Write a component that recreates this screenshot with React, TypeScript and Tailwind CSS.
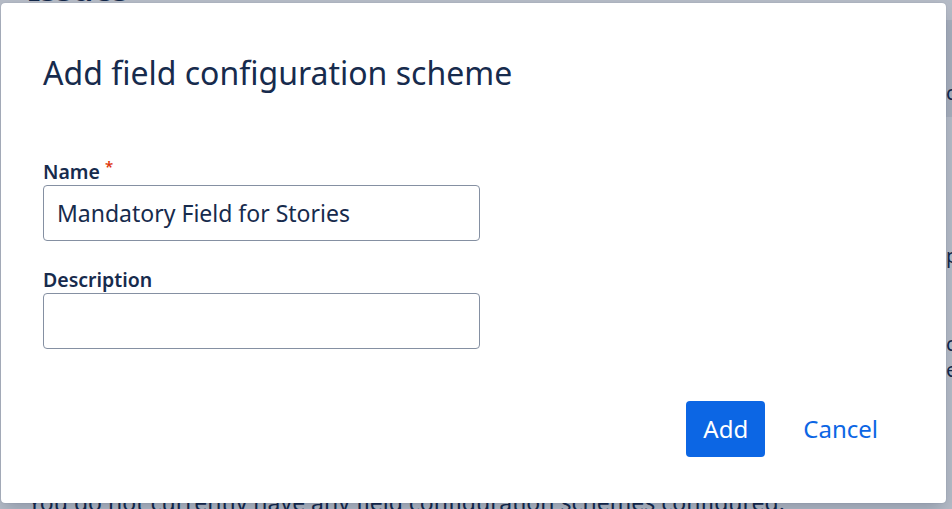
import React from "react";

export default function App() {
  return (
    <div className="relative w-[952px] h-[509px] overflow-hidden bg-white text-[#172b4d]" style={{ fontFamily: '"Noto Sans", "Open Sans", sans-serif' }}>
      {/* page behind the modal */}
      <div className="flex h-full">
        <div className="w-[946px] shrink-0 pl-[28px] flex flex-col">
          <h1 className="text-[32px] leading-[36px] font-bold mt-[-29px]">Issues</h1>
          <div className="flex-1" />
          <p className="text-[23px] leading-[28px] mb-[-7px] whitespace-nowrap">
            You do not currently have any field configuration schemes configured.
          </p>
        </div>
        <div className="flex-1 flex flex-col text-[20px] leading-[26px] whitespace-nowrap">
          <div className="mt-[20px] h-[97px] bg-[#ebecf0] pt-[60px]">configuration</div>
          <div className="mt-[126px]">p</div>
          <div className="mt-[62px]">c</div>
          <div>e</div>
        </div>
      </div>

      {/* overlay */}
      <div className="absolute inset-0 bg-[#091e42]/30" />

      {/* modal */}
      <div className="absolute left-[1px] top-[3px] w-[945px] h-[500px] bg-white rounded-[4px] shadow-[0_8px_16px_-4px_rgba(9,30,66,0.25),0_0_1px_rgba(9,30,66,0.31)] flex flex-col px-[42px]">
        <h2 className="text-[32px] leading-[40px] font-normal mt-[50px] whitespace-nowrap">Add field configuration scheme</h2>

        <div className="mt-[67px] flex flex-col">
          <label className="text-[19.5px] leading-[24px] font-semibold">
            Name<span className="text-[#de350b] text-[15px] align-top relative top-[-6px] ml-[5px]">*</span>
          </label>
          <input
            defaultValue="Mandatory Field for Stories"
            className="mt-[1px] w-[437px] h-[56px] border border-[#8590a2] rounded-[4px] px-[13px] text-[23px] text-[#172b4d] outline-none"
          />
          <label className="mt-[27px] text-[19.5px] leading-[24px] font-semibold">Description</label>
          <input className="mt-[1px] w-[437px] h-[56px] border border-[#8590a2] rounded-[4px] px-[13px] text-[23px] outline-none" />
        </div>

        <div className="mt-[52px] flex justify-end items-center gap-[26px] pr-[14px]">
          <button className="h-[56px] w-[79px] bg-[#0c66e4] text-white rounded-[4px] text-[24px]">Add</button>
          <button className="h-[56px] px-[12px] text-[#0c66e4] text-[24px]">Cancel</button>
        </div>
      </div>
    </div>
  );
}
